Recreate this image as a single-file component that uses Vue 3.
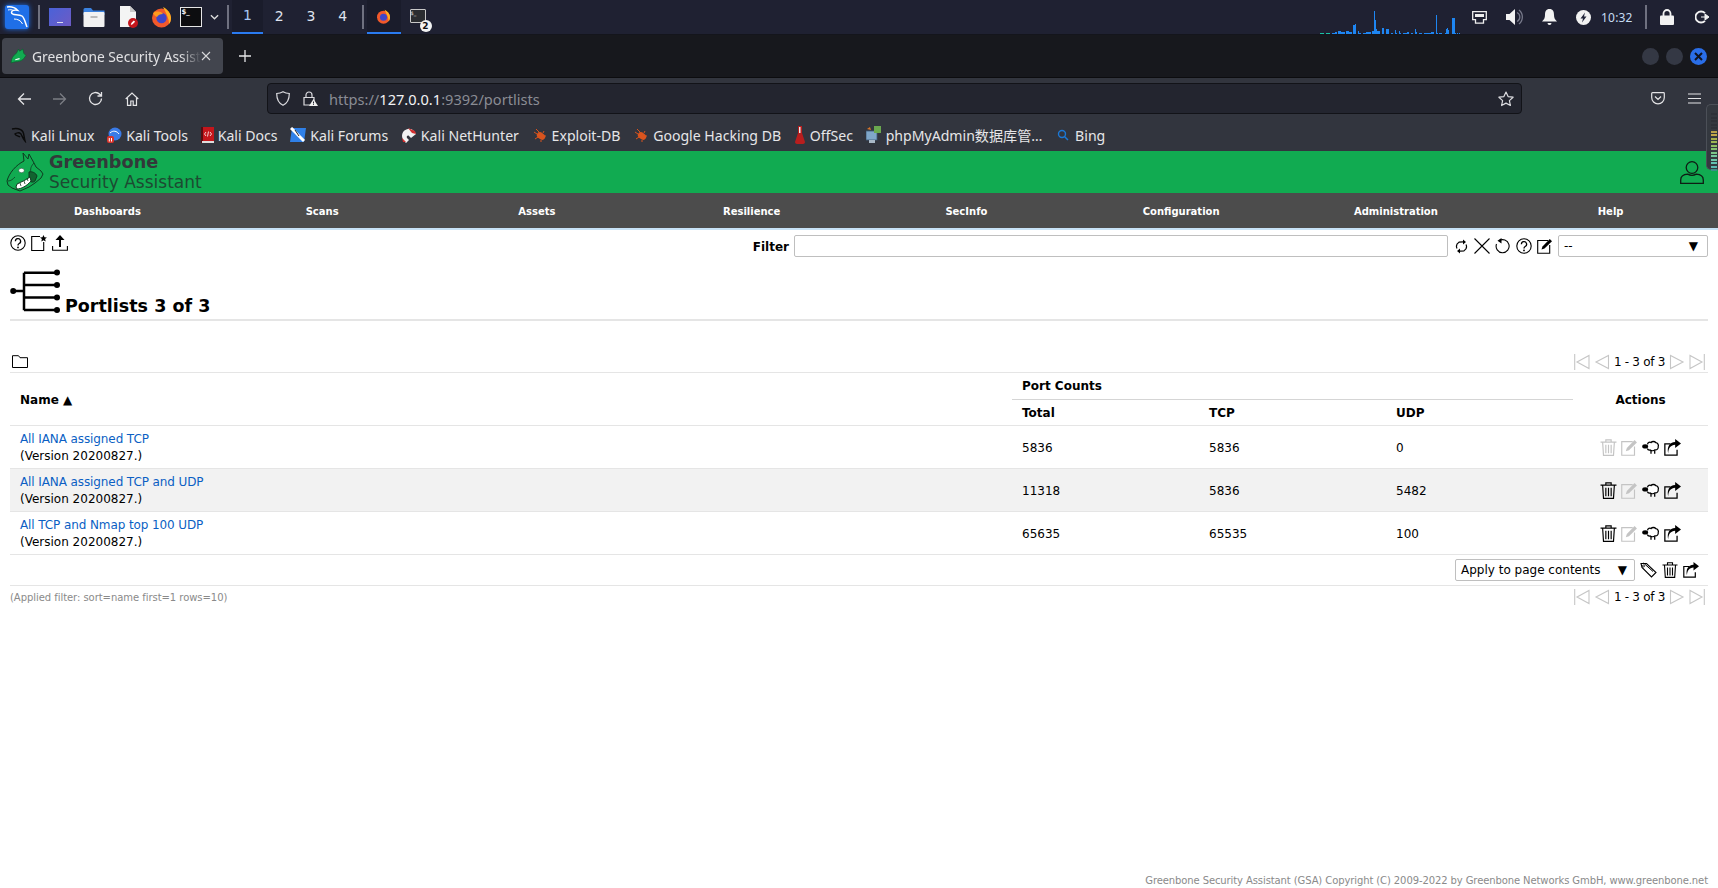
<script setup>
const workspaces = ['1', '2', '3', '4']

// [start, end, height] of the bars in the panel's load graph
const graphSpans = [
  [12, 14, 1], [15, 16, 2], [18, 20, 3], [21, 24, 2], [26, 28, 3], [29, 31, 2], [33, 34, 9], [35, 35, 10],
  [38, 38, 3], [39, 40, 1], [43, 45, 1], [46, 50, 2], [52, 53, 3], [54, 54, 23], [55, 55, 14], [56, 56, 5],
  [57, 59, 3], [62, 63, 6], [66, 68, 5], [71, 72, 1], [75, 75, 4], [76, 76, 1], [79, 79, 3], [80, 80, 1],
  [83, 86, 1], [87, 88, 2], [91, 92, 1], [95, 95, 5], [96, 96, 2], [99, 101, 1], [104, 110, 1], [111, 113, 2],
  [116, 116, 19], [117, 117, 1], [119, 121, 1], [125, 125, 1], [126, 126, 5], [127, 127, 6], [128, 128, 4],
  [132, 134, 16], [135, 135, 1], [137, 137, 1], [139, 139, 1]
]
const graph = Array(140).fill(0)
graphSpans.forEach(([a, b, h]) => {
  for (let i = a; i <= b; i++) graph[i] = h
})
;[0, 1, 2, 3, 6, 7, 8, 9].forEach((i) => { graph[i] = 1 })

const meterColors = ['#2e3138', '#2e3138', '#2e3138', '#2e3138', '#2e3138', '#b8a24a', '#c2a84a', '#a8b04c', '#9cb552', '#8fbd62', '#84c070', '#7cc488', '#74c49c', '#6cc4a8', '#62c0b0', '#5ab8b0', '#3b8f8a']

const menu = ['Dashboards', 'Scans', 'Assets', 'Resilience', 'SecInfo', 'Configuration', 'Administration', 'Help']

const rows = [
  { name: 'All IANA assigned TCP', total: 5836, tcp: 5836, udp: 0, canDelete: false },
  { name: 'All IANA assigned TCP and UDP', total: 11318, tcp: 5836, udp: 5482, canDelete: true },
  { name: 'All TCP and Nmap top 100 UDP', total: 65635, tcp: 65535, udp: 100, canDelete: true }
]
</script>

<template>
  <div class="screen">
    <!-- shared icons -->
    <svg class="defs" aria-hidden="true">
      <symbol id="i-help" viewBox="0 0 16 16">
        <circle cx="8" cy="8" r="7.2" fill="none" stroke="#000" stroke-width="1.1" />
        <path d="M5.4 6.2a2.6 2.6 0 1 1 3.8 2.3c-.8.4-1.2.9-1.2 2" fill="none" stroke="#000" stroke-width="1.3" />
        <circle cx="8" cy="12.4" r=".9" />
      </symbol>
      <symbol id="i-trash" viewBox="0 0 16 16">
        <path d="M.5 3h15M5.500 2.800V.8h5v2M2.500 3.300l.8 12.100h9.400l.8-12.100" fill="none" stroke="currentColor" stroke-width="1.100" />
        <path d="M5.500 5.500v8M8 5.500v8M10.500 5.500v8" fill="none" stroke="currentColor" stroke-width="1.100" />
      </symbol>
      <symbol id="i-edit" viewBox="0 0 16 16">
        <path d="M11 2.500H.7v12.800h12V7" fill="none" stroke="currentColor" stroke-width="1.100" />
        <path d="M4.500 11.500l1-3L12.800 1 15 3.200 7.500 10.600z" fill="currentColor" />
      </symbol>
      <symbol id="i-sheep" viewBox="0 0 17 14">
        <path d="M5.200 4c.2-1.800 2.300-2.500 3.300-1.700C9.500 1 12 1 13 2.400c1.800.2 3 2.300 2.300 3.900.4 1.700-1.300 3.300-3 2.900-1.200 1-3.500 1-4.600.1-1.200.3-2.300-.2-2.700-1.300" fill="#fff" stroke="#000" stroke-width="1.200" />
        <ellipse cx="3" cy="6" rx="2.800" ry="2" />
        <path d="M8.500 9.500v3.500M12 9.500v3.500" stroke="#000" stroke-width="1.200" />
      </symbol>
      <symbol id="i-export" viewBox="0 0 16 16">
        <path d="M6 4.500H.8v10.700h11.500v-5" fill="none" stroke="#000" stroke-width="1.200" />
        <path d="M4 13.500c0-5 2.500-7.800 6.500-8V8.500L16 4.200 10.500 0v2.800C5 3 2.500 7.800 4 13.500z" />
      </symbol>
      <symbol id="i-tag" viewBox="0 0 17 16">
        <path d="M1 1.500h5.500l9.500 9-4.500 4.500-9.500-9.500z" fill="none" stroke="#000" stroke-width="1.100" />
        <path d="M3.500 1l9.500 8.500" fill="none" stroke="#000" stroke-width="1" />
        <circle cx="3.500" cy="4" r="1" fill="none" stroke="#000" stroke-width=".8" />
      </symbol>
      <symbol id="i-first" viewBox="0 0 16 16">
        <path d="M.7 0v16M15 1.500v13L3 8z" fill="none" stroke="#c6c6c6" stroke-width="1.100" />
      </symbol>
      <symbol id="i-prev" viewBox="0 0 16 16">
        <path d="M14.500 1.500v13L2 8z" fill="none" stroke="#c6c6c6" stroke-width="1.100" />
      </symbol>
      <symbol id="i-next" viewBox="0 0 16 16">
        <path d="M1.500 1.500v13L14 8z" fill="none" stroke="#c6c6c6" stroke-width="1.100" />
      </symbol>
      <symbol id="i-last" viewBox="0 0 16 16">
        <path d="M15.300 0v16M1 1.500v13L13 8z" fill="none" stroke="#c6c6c6" stroke-width="1.100" />
      </symbol>
      <symbol id="i-bug" viewBox="0 0 16 16">
        <ellipse cx="9" cy="9" rx="4.500" ry="3.200" transform="rotate(35 9 9)" fill="#d9541e" />
        <path d="M2 5l3 2M4 2l3 3M3 12l3-2M12 4l-1 2M14 9l-2 0M9 15l0-2" stroke="#d9541e" stroke-width="1" />
      </symbol>
    </svg>

    <header class="panel">
      <div class="kali-btn">
        <svg width="24" height="24" viewBox="0 0 24 24">
          <path d="M2 2c4-.5 8 .5 10.500 3.200-3-.7-6 .3-6 2.300 0 3.500 7 1 10.500 3.500 2.500 2 3 6 5 11" fill="none" stroke="#fff" stroke-width="1.500" />
          <path d="M9 14c3.500 0 7 1.500 8.500 5M3 5c2-.5 4-.3 5.500.5" fill="none" stroke="#fff" stroke-width="1" />
        </svg>
      </div>
      <span class="sep sep-a"></span>
      <div class="launchers">
        <span class="app-desktop"><i></i></span>
        <svg width="22" height="20" viewBox="0 0 21 20">
          <path d="M0 2.500Q0 1 1.500 1h6l2 2.500H21V8H0z" fill="#3b82e0" />
          <rect y="5" width="21" height="15" rx="1" fill="#f2f2f2" />
          <rect x="7" y="9" width="7" height="2" fill="#bbb" />
        </svg>
        <svg class="app-doc" width="20" height="22" viewBox="0 0 20 22">
          <path d="M1 0h10l6 6v15H1z" fill="#f4f4f4" />
          <path d="M11 0l6 6h-6z" fill="#c8c8c8" />
          <circle cx="14" cy="17" r="5" fill="#c4161c" />
          <path d="M11.800 19l.5-2 2.500-2.500 1.300 1.300-2.500 2.500z" fill="#fff" />
        </svg>
        <svg width="21" height="22" viewBox="0 0 21 22">
          <circle cx="10.500" cy="12" r="9.500" fill="#f2592b" />
          <path d="M12 1c4 2 8 6 8 11 0 3-1 5-2 6 0-5-2-9-6-17z" fill="#ffb01f" />
          <circle cx="10.500" cy="12" r="5.200" fill="#3f46c8" />
          <path d="M2 7c3-2 8-2 10 1-3 0-5 1-6 3-2-1-3-2-4-4z" fill="#ff9a1e" />
        </svg>
        <span class="app-term">$_</span>
        <svg class="chev" width="9" height="6" viewBox="0 0 10 6"><path d="M1 1l4 4 4-4" fill="none" stroke="#dcdcdc" stroke-width="1.500" /></svg>
      </div>
      <span class="sep sep-b"></span>
      <div class="workspaces">
        <span v-for="(w, i) in workspaces" :key="w" :class="['ws', { active: i === 0 }]">{{ w }}</span>
      </div>
      <span class="sep sep-c"></span>
      <div class="tasks">
        <span class="task active">
          <svg width="15" height="15" viewBox="0 0 21 22">
            <circle cx="10.500" cy="12" r="9.500" fill="#f2592b" />
            <path d="M12 1c4 2 8 6 8 11 0 3-1 5-2 6 0-5-2-9-6-17z" fill="#ffb01f" />
            <circle cx="10.500" cy="12" r="5.200" fill="#3f46c8" />
          </svg>
        </span>
        <span class="task task-second">
          <span class="task-term">$_</span>
          <span class="task-count">2</span>
        </span>
      </div>
      <div class="graph">
        <i
          v-for="(h, i) in graph"
          :key="i"
          :class="{ teal: i < 10 }"
          :style="{ height: h + 'px' }"
        ></i>
      </div>
      <div class="tray">
        <svg width="15" height="13" viewBox="0 0 15 13">
          <path d="M.7.700h13.600v8h-2.800v3.500h-8V8.700H.7z" fill="none" stroke="#eee" stroke-width="1.300" />
          <path d="M3 3h9v3H3z" fill="#eee" />
        </svg>
        <svg width="18" height="16" viewBox="0 0 18 16">
          <path d="M0 5h3.500L9 0v16l-5.500-5H0z" fill="#f2f2f2" />
          <path d="M11 3.500a5 5 0 0 1 0 9M13 1a9 9 0 0 1 0 14" fill="none" stroke="#77798a" stroke-width="1.300" />
        </svg>
        <svg width="15" height="16" viewBox="0 0 15 16">
          <path d="M7.500 0c3.500 0 4.500 2.500 4.500 6 0 3 1 4.500 3 6.500H0C2 10.500 3 9 3 6c0-3.500 1-6 4.500-6zM5.500 14h4a2 2 0 0 1-4 0z" fill="#f2f2f2" />
        </svg>
        <svg width="15" height="15" viewBox="0 0 15 15">
          <circle cx="7.500" cy="7.500" r="7.500" fill="#f2f2f2" />
          <path d="M9 2.500L4.500 8.500h2.500l-1 4L10.500 6.500H8z" fill="#23263a" />
        </svg>
        <span class="clock">10:32</span>
        <span class="sep tray-sep"></span>
        <svg width="14" height="16" viewBox="0 0 14 16">
          <path d="M3.500 7V4.500a3.500 3.500 0 0 1 7 0V7" fill="none" stroke="#f2f2f2" stroke-width="1.800" />
          <rect y="6.500" width="14" height="9.500" rx="1" fill="#f2f2f2" />
        </svg>
        <svg width="15" height="14" viewBox="0 0 15 14">
          <path d="M10 3.200A5.500 5.500 0 1 0 10 10.800" fill="none" stroke="#f2f2f2" stroke-width="1.800" />
          <path d="M6 7h6M10 4l4 3-4 3z" fill="#f2f2f2" stroke="#f2f2f2" stroke-width="1" />
        </svg>
      </div>
    </header>

    <div class="tabstrip">
      <div class="tab">
        <svg class="favicon" width="17" height="17" viewBox="0 0 16 16">
          <path d="M1 14c0-4 2-7 5-9l2-4 1 2 3-2 1 4 2 2-2 3c-2 2-5 3-8 3z" fill="#11ab51" stroke="#0a5c2b" stroke-width=".6" />
          <path d="M5 11l4-1" stroke="#fff" stroke-width="1" />
        </svg>
        <span class="tab-title">Greenbone Security Assist</span>
        <svg class="tab-close" width="10" height="10" viewBox="0 0 10 10"><path d="M1 1l8 8M9 1l-8 8" stroke="#d8d8da" stroke-width="1.100" /></svg>
      </div>
      <svg class="tab-new" width="12" height="12" viewBox="0 0 12 12"><path d="M6 0v12M0 6h12" stroke="#e6e6e8" stroke-width="1.300" /></svg>
      <div class="win-btns">
        <span class="win-btn"></span>
        <span class="win-btn"></span>
        <span class="win-btn close">
          <svg width="9" height="9" viewBox="0 0 9 9"><path d="M1 1l7 7M8 1L1 8" stroke="#101320" stroke-width="2" /></svg>
        </span>
      </div>
    </div>

    <div class="navbar">
      <div class="nav-btns">
        <svg width="14" height="14" viewBox="0 0 14 14"><path d="M14 7H1.500M7 1.500L1.500 7 7 12.500" fill="none" stroke="#e4e4e6" stroke-width="1.300" /></svg>
        <svg width="14" height="14" viewBox="0 0 14 14"><path d="M0 7h12.500M7 1.500L12.500 7 7 12.500" fill="none" stroke="#7b7d84" stroke-width="1.300" /></svg>
        <svg width="15" height="15" viewBox="0 0 15 15"><path d="M13.500 7.500a6 6 0 1 1-1.800-4.300L13.500 5M13.500 1v4h-4" fill="none" stroke="#e4e4e6" stroke-width="1.300" /></svg>
        <svg width="14" height="14" viewBox="0 0 14 14"><path d="M.7 7L7 1l6.300 6M2.500 6v7.300h3.300V9h2.400v4.300h3.300V6" fill="none" stroke="#e4e4e6" stroke-width="1.200" /></svg>
      </div>
      <div class="urlbar">
        <svg width="14" height="15" viewBox="0 0 14 15"><path d="M7 .7c2 1.200 4 1.700 6.300 1.800 0 5.500-1.500 9.500-6.300 11.800C2.200 12 .7 8 .7 2.500 3 2.400 5 1.900 7 .7z" fill="none" stroke="#dcdce0" stroke-width="1.200" /></svg>
        <svg class="lock" width="15" height="15" viewBox="0 0 15 15">
          <path d="M3 6.500V4a3 3 0 0 1 6 0v2.500M1 6.500h10V14H1z" fill="none" stroke="#dcdce0" stroke-width="1.200" />
          <path d="M10.500 8L15 15H6z" fill="#f0f0f0" />
          <path d="M10.500 10.500v2M10.500 13.200v.8" stroke="#23252f" stroke-width="1" />
        </svg>
        <span class="url"><span class="dim">https://</span>127.0.0.1<span class="dim">:9392/portlists</span></span>
        <svg class="star" width="16" height="16" viewBox="0 0 16 16"><path d="M8 1l2.100 4.600 5 .6-3.700 3.400 1 4.900L8 12.100l-4.400 2.400 1-4.900L.9 6.200l5-.6z" fill="none" stroke="#dcdce0" stroke-width="1.200" stroke-linejoin="round" /></svg>
      </div>
      <div class="nav-right">
        <svg width="14" height="13" viewBox="0 0 14 13"><path d="M1.500.7h11q.8 0 .8.800v4a6.300 6.300 0 0 1-12.600 0v-4q0-.8.800-.8zM4 4.500l3 3 3-3" fill="none" stroke="#e4e4e6" stroke-width="1.200" /></svg>
        <svg width="13" height="11" viewBox="0 0 13 11"><path d="M0 1h13M0 5.500h13M0 10h13" stroke="#e4e4e6" stroke-width="1.200" /></svg>
      </div>
    </div>

    <div class="bookmarks">
      <span class="bm">
        <svg width="16" height="16" viewBox="0 0 16 16"><path d="M1 2c5-1 9 0 11 3 1 2 1 5 2 9-2-2-3-5-4-7-2-2-5-1-6 0 1 2 4 2 5 3" fill="none" stroke="#0b0b0b" stroke-width="1.500" /></svg>
        Kali Linux
      </span>
      <span class="bm">
        <svg width="15" height="16" viewBox="0 0 15 16">
          <circle cx="8" cy="7" r="6.500" fill="#3a7be8" />
          <path d="M3 6c3-3 7-2 9 1" fill="none" stroke="#fff" stroke-width="1" />
          <rect x="0" y="9" width="7" height="7" rx="2" fill="#d8342c" />
          <path d="M2.300 11v3.500M4.500 11v3.500" stroke="#fff" stroke-width="1" />
        </svg>
        Kali Tools
      </span>
      <span class="bm">
        <svg width="13" height="16" viewBox="0 0 13 16">
          <rect x="1" y="0" width="12" height="14" fill="#c4161c" />
          <rect x="0" y="0" width="2" height="16" fill="#5a0c10" />
          <rect x="1" y="14" width="12" height="2" fill="#ddd" />
          <path d="M5 5L3.500 7 5 9M9 5l1.500 2L9 9M7.500 4.500l-1 5" fill="none" stroke="#fff" stroke-width=".8" />
        </svg>
        Kali Docs
      </span>
      <span class="bm">
        <svg width="16" height="16" viewBox="0 0 16 16">
          <path d="M2 1h14l-2 14H0z" fill="#2f80e8" />
          <path d="M1 1l13 13" stroke="#fff" stroke-width="3" />
          <path d="M5 3l4 6" stroke="#222" stroke-width="1" />
        </svg>
        Kali Forums
      </span>
      <span class="bm">
        <svg width="16" height="16" viewBox="0 0 16 16">
          <path d="M1 9a7 7 0 0 1 12-5l2 3-5 4-2-2c-1-1-3 0-2 2l2 2-3 3C3 14 1 12 1 9z" fill="#f2f2f2" />
          <path d="M7 1l7 3 1 3-4-1z" fill="#d32f2f" />
          <path d="M1 11l4 4H2z" fill="#d32f2f" />
        </svg>
        Kali NetHunter
      </span>
      <span class="bm">
        <svg width="16" height="16"><use href="#i-bug" /></svg>
        Exploit-DB
      </span>
      <span class="bm">
        <svg width="16" height="16"><use href="#i-bug" /></svg>
        Google Hacking DB
      </span>
      <span class="bm">
        <svg width="12" height="18" viewBox="0 0 12 18">
          <path d="M4 0h4v7l3 9c0 1-1 2-2 2H3c-1 0-2-1-2-2l3-9z" fill="#b81e1e" />
          <path d="M5 1h1.500v6H5z" fill="#e9e9e9" />
        </svg>
        OffSec
      </span>
      <span class="bm">
        <svg width="16" height="18" viewBox="0 0 16 18">
          <rect x="0" y="5" width="11" height="9" fill="#7fa6c9" stroke="#3e5b78" stroke-width=".8" />
          <rect x="3" y="14" width="6" height="3" fill="#a8b8c6" />
          <path d="M8 0h7v7H8z" fill="#6aa84f" />
          <path d="M1 3l3-2 1 3z" fill="#d9762a" />
        </svg>
        phpMyAdmin数据库管…
      </span>
      <span class="bm">
        <svg width="16" height="16" viewBox="0 0 16 16">
          <circle cx="7" cy="7" r="3.500" fill="none" stroke="#1b78d6" stroke-width="1.400" />
          <path d="M9.500 9.500L13 13" stroke="#1b78d6" stroke-width="1.500" />
        </svg>
        Bing
      </span>
    </div>

    <div class="gsa-head">
      <div class="logo">
        <svg width="38" height="41" viewBox="6 1 38 41">
          <path d="M7 30C9 22 16 14 24 10L23 2l5 6 1-5 5 9 2 4 5 4 2 3-2 4-6 5-6 4-9 4-8-3-4-3z" fill="#11ab51" stroke="#0f3a20" stroke-width="1" />
          <path d="M8 30c3 0 5-2 7-4M34 12c-3 3-4 6-3 10" fill="none" stroke="#0f3a20" stroke-width=".8" />
          <ellipse cx="21.500" cy="19.500" rx="2.800" ry="2.200" fill="#fff" stroke="#0f3a20" stroke-width=".5" />
          <path d="M29 21c3-1 7 1 8 4l-2 5c-2 2-5 1-6-1z" fill="#12632f" stroke="#0f3a20" stroke-width="1" />
          <path d="M17 38c4 0 10-3 14-8l-1-4c-4 3-9 5-13 7l-1 3z" fill="#fff" stroke="#0f3a20" stroke-width="1" />
          <path d="M21 35l-1-3M25 33l-1-3M28 30l-1-3" stroke="#0f3a20" stroke-width=".8" />
        </svg>
        <div class="logo-text">
          <span class="logo-top">Greenbone</span>
          <span class="logo-bottom">Security Assistant</span>
        </div>
      </div>
      <svg class="user" width="24" height="23" viewBox="0 0 24 23">
        <circle cx="12" cy="6.500" r="5.800" fill="none" stroke="#0e1d14" stroke-width="1.300" />
        <path d="M.7 22.300v-3.300c0-3.500 3-5.500 7-5.800 2.500 1.300 6 1.300 8.600 0 4 .3 7 2.300 7 5.800v3.300z" fill="none" stroke="#0e1d14" stroke-width="1.300" />
      </svg>
    </div>

    <nav class="menu">
      <a v-for="item in menu" :key="item" class="menu-item">{{ item }}</a>
    </nav>

    <main class="page">
      <div class="toolbar">
        <div class="tool-icons">
          <svg width="16" height="16"><use href="#i-help" /></svg>
          <svg width="16" height="16" viewBox="0 0 16 16">
            <path d="M9 1.500H.7v14h12V7" fill="none" stroke="#000" stroke-width="1.100" />
            <path d="M12.500 0l1 2.300 2.400.2-1.800 1.600.6 2.400-2.200-1.300-2.200 1.300.6-2.400L9 2.500l2.400-.2z" />
          </svg>
          <svg width="16" height="16" viewBox="0 0 16 16">
            <path d="M.6 11v4.300h14.800V11" fill="none" stroke="#000" stroke-width="1.100" />
            <path d="M8 12V3" stroke="#000" stroke-width="2" />
            <path d="M8 0l4.500 5h-9z" />
          </svg>
        </div>
        <div class="filter">
          <label class="filter-label">Filter</label>
          <div class="filter-input"></div>
          <div class="filter-icons">
            <svg width="13" height="15" viewBox="0 0 13 15">
              <path d="M2 9.500A5 5 0 0 1 4 3.200L8 2.800M11 5.500a5 5 0 0 1-2 6.300l-4 .4" fill="none" stroke="#000" stroke-width="1.200" />
              <path d="M8 .5l3 2.500-3 2.500zM5 9.500L2 12l3 2.500z" />
            </svg>
            <svg width="16" height="16" viewBox="0 0 16 16"><path d="M.5.500l15 15M15.500.500l-15 15" stroke="#000" stroke-width="1.100" /></svg>
            <svg width="15" height="16" viewBox="0 0 15 16">
              <path d="M4 2.800A6.500 6.500 0 1 1 1.500 6" fill="none" stroke="#000" stroke-width="1.100" />
              <path d="M6.500 0v5.500L2.500 2.800z" />
            </svg>
            <svg width="16" height="16"><use href="#i-help" /></svg>
            <svg class="edit-black" width="16" height="16"><use href="#i-edit" /></svg>
          </div>
          <div class="select filter-select">
            <span>--</span>
            <span class="caret">▼</span>
          </div>
        </div>
      </div>

      <div class="title">
        <svg class="title-icon" width="50" height="44" viewBox="0 0 50 44">
          <path d="M3 22h11M14 3.700v37.600M14 3.700h33M14 16h33M14 28.500h33M14 41h33" fill="none" stroke="#000" stroke-width="2.500" />
          <circle cx="3.200" cy="22" r="3" />
          <circle cx="47" cy="3.500" r="3" />
          <circle cx="47" cy="16" r="3" />
          <circle cx="47" cy="28.500" r="3" />
          <circle cx="47" cy="41" r="3" />
        </svg>
        <h1>Portlists 3 of 3</h1>
      </div>

      <div class="table-top">
        <svg class="folder" width="16" height="13" viewBox="0 0 16 13">
          <path d="M.5 12.500V.7h6l1.500 2h7.500v9.800z" fill="none" stroke="#000" stroke-width="1" />
        </svg>
        <div class="pager">
          <svg width="16" height="16"><use href="#i-first" /></svg>
          <svg width="16" height="16"><use href="#i-prev" /></svg>
          <span>1 - 3 of 3</span>
          <svg width="16" height="16"><use href="#i-next" /></svg>
          <svg width="16" height="16"><use href="#i-last" /></svg>
        </div>
      </div>

      <table class="list">
        <colgroup>
          <col class="col-name" />
          <col class="col-count" />
          <col class="col-count" />
          <col class="col-count" />
          <col />
        </colgroup>
        <thead>
          <tr class="head-a">
            <th rowspan="2" class="name-head">Name <span class="sort">▲</span></th>
            <th colspan="3" class="group-head">Port Counts</th>
            <th rowspan="2" class="actions-head">Actions</th>
          </tr>
          <tr class="head-b">
            <th>Total</th>
            <th>TCP</th>
            <th>UDP</th>
          </tr>
        </thead>
        <tbody>
          <tr v-for="row in rows" :key="row.name">
            <td class="name-cell">
              <a class="name-link">{{ row.name }}</a>
              <div>(Version 20200827.)</div>
            </td>
            <td class="num">{{ row.total }}</td>
            <td class="num">{{ row.tcp }}</td>
            <td class="num">{{ row.udp }}</td>
            <td class="actions">
              <svg :class="['act', { off: !row.canDelete }]" width="17" height="17"><use href="#i-trash" /></svg>
              <svg class="act off" width="17" height="17"><use href="#i-edit" /></svg>
              <svg class="act" width="18" height="15"><use href="#i-sheep" /></svg>
              <svg class="act" width="17" height="17"><use href="#i-export" /></svg>
            </td>
          </tr>
        </tbody>
      </table>

      <div class="bulk">
        <div class="select bulk-select">
          <span>Apply to page contents</span>
          <span class="caret">▼</span>
        </div>
        <svg width="17" height="16"><use href="#i-tag" /></svg>
        <svg width="16" height="16"><use href="#i-trash" /></svg>
        <svg width="16" height="16"><use href="#i-export" /></svg>
      </div>

      <div class="table-foot">
        <span class="applied">(Applied filter: sort=name first=1 rows=10)</span>
        <div class="pager">
          <svg width="16" height="16"><use href="#i-first" /></svg>
          <svg width="16" height="16"><use href="#i-prev" /></svg>
          <span>1 - 3 of 3</span>
          <svg width="16" height="16"><use href="#i-next" /></svg>
          <svg width="16" height="16"><use href="#i-last" /></svg>
        </div>
      </div>

      <footer class="copyright">
        Greenbone Security Assistant (GSA) Copyright (C) 2009-2022 by Greenbone Networks GmbH, www.greenbone.net
      </footer>
    </main>

    <!-- desktop widget that sits on top of the browser window -->
    <div class="meter">
      <i v-for="(c, n) in meterColors" :key="n" :style="{ background: c }"></i>
    </div>
  </div>
</template>

<style>
html,
body {
  margin: 0;
  height: 100%;
  background: #fff;
}
</style>

<style scoped>
.screen {
  width: 1718px;
  height: 888px;
  display: flex;
  flex-direction: column;
  overflow: hidden;
  position: relative;
  font-family: "DejaVu Sans", sans-serif;
  font-size: 12px;
  color: #000;
}

.defs {
  position: absolute;
  width: 0;
  height: 0;
}

/* desktop panel */
.panel {
  height: 35px;
  box-sizing: border-box;
  flex: none;
  display: flex;
  align-items: center;
  background: #1f2132;
  border-bottom: 1px solid #14151c;
  padding-left: 5px;
  color: #e8e8ee;
}

.kali-btn {
  width: 24px;
  height: 24px;
  background: #1f6fe8;
  border-radius: 3px;
  box-shadow: 0 0 5px #1f6fe8;
  display: flex;
}

.sep {
  width: 2px;
  height: 24px;
  background: #6f7180;
  flex: none;
}

.sep-a {
  margin: 0 8.500px 0 9px;
}

.sep-b {
  margin: 0 3px 0 8px;
}

.sep-c {
  margin: 0 3px 0 3px;
}

.launchers {
  display: flex;
  align-items: center;
  gap: 12px;
}

.app-desktop {
  width: 22px;
  height: 18px;
  background: linear-gradient(135deg, #4a62d8, #6d5bc4);
  display: flex;
  align-items: flex-end;
  justify-content: center;
}

.app-desktop i {
  width: 6px;
  height: 1px;
  margin-bottom: 3px;
  background: #dde;
}

.app-doc {
  margin-left: 2px;
}

.app-term {
  width: 22px;
  height: 20px;
  box-sizing: border-box;
  background: #0d0d10;
  border: 1px solid #e6e6e6;
  font-size: 7px;
  font-weight: bold;
  color: #eee;
  padding-left: 1px;
  margin-left: -4px;
}

.chev {
  margin-left: -4px;
}

.workspaces {
  display: flex;
  height: 34px;
}

.ws {
  width: 31.750px;
  display: flex;
  align-items: center;
  justify-content: center;
  font-size: 14px;
  box-sizing: border-box;
  padding-bottom: 2px;
  color: #dfe3ee;
}

.ws.active {
  background: #1a1c2b;
  border-bottom: 2px solid #2a7bf0;
  color: #a9c8f5;
}

.tasks {
  display: flex;
  height: 34px;
}

.task {
  width: 34px;
  display: flex;
  align-items: center;
  justify-content: center;
  box-sizing: border-box;
  position: relative;
}

.task.active {
  background: #1a1c2b;
  border-bottom: 2px solid #2a7bf0;
  margin-right: 9px;
}

.task-second {
  width: 22px;
  justify-content: flex-start;
}

.task-term {
  width: 16px;
  height: 14px;
  box-sizing: border-box;
  border: 1px solid #c8c8c8;
  border-radius: 1px;
  background: #2a2c30;
  font-size: 5px;
  line-height: 7px;
  color: #eee;
  margin-top: -2px;
}

.task-count {
  position: absolute;
  left: 10px;
  top: 20px;
  width: 12px;
  height: 12px;
  border-radius: 50%;
  background: #f2f2f2;
  color: #111;
  font-size: 9px;
  font-weight: bold;
  line-height: 12px;
  text-align: center;
}

.graph {
  margin-left: auto;
  height: 34px;
  display: flex;
  align-items: flex-end;
  width: 140px;
  flex: none;
}

.graph i {
  width: 1px;
  background: #1e86f2;
  flex: none;
}

.graph i.teal {
  background: #19c2a4;
}

.tray {
  display: flex;
  align-items: center;
  margin-left: 12px;
  padding-right: 8px;
}

.tray > svg:nth-child(1) {
  margin-right: 19px;
}

.tray > svg:nth-child(2) {
  margin-right: 18px;
}

.tray > svg:nth-child(3) {
  margin-right: 19px;
}

.tray > svg:nth-child(4) {
  margin-right: 10px;
}

.clock {
  width: 32px;
  font-family: "Noto Sans", sans-serif;
  font-size: 12px;
  letter-spacing: .2px;
  color: #c6dcf2;
  white-space: nowrap;
}

.tray-sep {
  margin: 0 13px 0 12px;
}

.tray > svg:nth-last-child(2) {
  margin-right: 21px;
}

/* firefox */
.tabstrip {
  height: 43px;
  flex: none;
  display: flex;
  align-items: center;
  background: #17181d;
  border-bottom: 1px solid #0c0c0f;
  box-sizing: border-box;
  padding-left: 2px;
  font-family: "Noto Sans", sans-serif;
}

.tab {
  width: 221px;
  height: 36px;
  box-sizing: border-box;
  background: #42454e;
  border-radius: 4px;
  display: flex;
  align-items: center;
  padding: 0 12px 0 8px;
  color: #e2e2e4;
  font-size: 13.800px;
}

.favicon {
  flex: none;
}

.tab-title {
  flex: 1;
  min-width: 0;
  margin-left: 5px;
  white-space: nowrap;
  -webkit-mask-image: linear-gradient(to right, #000 88%, transparent);
  mask-image: linear-gradient(to right, #000 88%, transparent);
}

.tab-close {
  flex: none;
}

.tab-new {
  margin-left: 16px;
}

.win-btns {
  margin-left: auto;
  display: flex;
  gap: 7px;
  padding-right: 11px;
}

.win-btn {
  width: 17px;
  height: 17px;
  border-radius: 50%;
  background: #343844;
  display: flex;
  align-items: center;
  justify-content: center;
}

.win-btn.close {
  background: #2a6ee8;
}

.navbar {
  height: 44px;
  flex: none;
  box-sizing: border-box;
  padding-bottom: 3px;
  background: #32353e;
  display: flex;
  align-items: center;
  font-family: "Noto Sans", sans-serif;
}

.nav-btns {
  width: 267px;
  flex: none;
  box-sizing: border-box;
  padding-left: 17px;
  display: flex;
  align-items: center;
  gap: 21.500px;
}

.urlbar {
  width: 1255px;
  height: 31px;
  flex: none;
  box-sizing: border-box;
  background: #23252f;
  border: 1px solid #121318;
  border-radius: 4px;
  display: flex;
  align-items: center;
  padding: 0 7px 0 8px;
  color: #f2f2f4;
  font-size: 14.600px;
}

.lock {
  margin-left: 13px;
}

.url {
  margin-left: 11px;
  flex: 1;
}

.dim {
  color: #8a8c94;
}

.nav-right {
  flex: 1;
  display: flex;
  align-items: center;
  padding-left: 129px;
  gap: 23px;
}

.bookmarks {
  height: 29px;
  flex: none;
  box-sizing: border-box;
  padding: 0 0 3px 11px;
  background: #32353e;
  display: flex;
  align-items: center;
  gap: 12.700px;
  color: #e6e6e8;
  font-family: "Noto Sans", "Noto Sans CJK SC", sans-serif;
  font-size: 14.100px;
}

.bm {
  display: flex;
  align-items: center;
  gap: 4px;
  white-space: nowrap;
}

.meter {
  position: absolute;
  right: 0;
  top: 104px;
  width: 12px;
  height: 66px;
  box-sizing: border-box;
  background: #34383f;
  border: 1px solid #4c5058;
  border-right: none;
  border-radius: 5px 0 0 5px;
  padding: 8px 1px 0 4px;
}

.meter i {
  display: block;
  height: 2px;
  margin-bottom: 1.500px;
}

/* gsa */
.gsa-head {
  height: 42px;
  flex: none;
  background: #11ab51;
  display: flex;
  align-items: center;
  justify-content: space-between;
  padding: 0 14px 0 6px;
}

.logo {
  display: flex;
  align-items: center;
  gap: 5px;
}

.logo-text {
  display: flex;
  flex-direction: column;
  line-height: 20px;
  white-space: nowrap;
}

.logo-top {
  font-size: 17.700px;
  font-weight: bold;
  color: #33383a;
}

.logo-bottom {
  font-size: 17px;
  color: #1d4a32;
}

.menu {
  height: 35px;
  flex: none;
  display: flex;
  background: #4c4c4c;
  border-bottom: 2px solid #c7e2f6;
}

.menu-item {
  flex: 1;
  display: flex;
  align-items: center;
  justify-content: center;
  padding-top: 1px;
  color: #fff;
  font-size: 10px;
  font-weight: bold;
}

.page {
  flex: 1;
  min-height: 0;
  display: flex;
  flex-direction: column;
  padding: 0 10px;
  background: #fff;
}

.toolbar {
  display: flex;
  justify-content: space-between;
  padding-top: 5px;
}

.tool-icons {
  display: flex;
  gap: 5px;
}

.filter {
  display: flex;
  align-items: center;
}

.filter-label {
  font-weight: bold;
  padding-top: 1px;
}

.filter-input {
  width: 654px;
  height: 22px;
  box-sizing: border-box;
  border: 1px solid #bfbfbf;
  border-radius: 2px;
  margin: 0 7px 0 5px;
}

.filter-icons {
  display: flex;
  align-items: center;
  gap: 5.500px;
}

.edit-black {
  color: #000;
}

.select {
  box-sizing: border-box;
  height: 22px;
  border: 1px solid #bfbfbf;
  border-radius: 2px;
  display: flex;
  align-items: center;
  justify-content: space-between;
  padding: 0 7px 0 5px;
  background: #fff;
}

.filter-select {
  width: 150px;
  margin-left: 5px;
  padding-right: 9px;
}

.caret {
  font-size: 12px;
}

.title {
  display: flex;
  align-items: flex-end;
  margin-top: 11px;
  height: 53px;
  border-bottom: 2px solid #e5e5e5;
  box-sizing: border-box;
  gap: 5px;
}

.title-icon {
  margin-bottom: 6px;
}

.title h1 {
  margin: 0;
  font-size: 17.500px;
  line-height: 20px;
  padding-bottom: 3px;
}

.table-top {
  margin-top: 31px;
  display: flex;
  align-items: center;
  justify-content: space-between;
  height: 20px;
  padding-left: 2px;
}

.folder {
  margin-top: -2px;
}

.pager {
  display: flex;
  align-items: center;
  gap: 4px;
  padding-right: 3px;
  letter-spacing: -.3px;
}

.list {
  width: 100%;
  table-layout: fixed;
  border-collapse: collapse;
  border-top: 1px solid #e5e5e5;
}

.col-name {
  width: 1002px;
}

.col-count {
  width: 187px;
}

.list th {
  text-align: left;
  font-weight: bold;
  padding: 0 10px;
}

.head-a {
  height: 27px;
}

.head-b {
  height: 26px;
}

.group-head {
  border-bottom: 1px solid #d5d5d5;
}

.list th.name-head,
.list th.actions-head {
  padding-top: 2px;
}

.sort {
  font-size: 12px;
}

.list th.actions-head {
  text-align: center;
}

.list thead {
  border-bottom: 1px solid #e5e5e5;
}

.list td {
  height: 42px;
  box-sizing: border-box;
  padding: 1px 10px 0;
  border-bottom: 1px solid #e5e5e5;
  line-height: 17px;
}

.list td.num {
  padding-top: 3px;
}

.list tbody tr {
  height: 43px;
}

.list tbody tr:nth-child(even) {
  background: #f2f2f2;
}

.name-link {
  color: #0b5fc4;
  letter-spacing: -.1px;
}

.actions {
  text-align: center;
  white-space: nowrap;
  font-size: 0;
}

.act {
  color: #000;
  margin: 0 2px;
  vertical-align: middle;
}

.act.off {
  color: #c4c4c4;
}

.bulk {
  height: 30px;
  display: flex;
  align-items: center;
  justify-content: flex-end;
  gap: 5px;
  padding-right: 9px;
  border-bottom: 1px solid #e5e5e5;
}

.bulk-select {
  width: 180px;
}

.table-foot {
  height: 22px;
  display: flex;
  align-items: center;
  justify-content: space-between;
}

.applied {
  color: #8a8a8a;
  font-size: 10px;
  letter-spacing: -.05px;
}

.copyright {
  margin-top: auto;
  padding-bottom: 2px;
  text-align: right;
  color: #8a8a8a;
  font-size: 10px;
  letter-spacing: -.1px;
}
</style>
